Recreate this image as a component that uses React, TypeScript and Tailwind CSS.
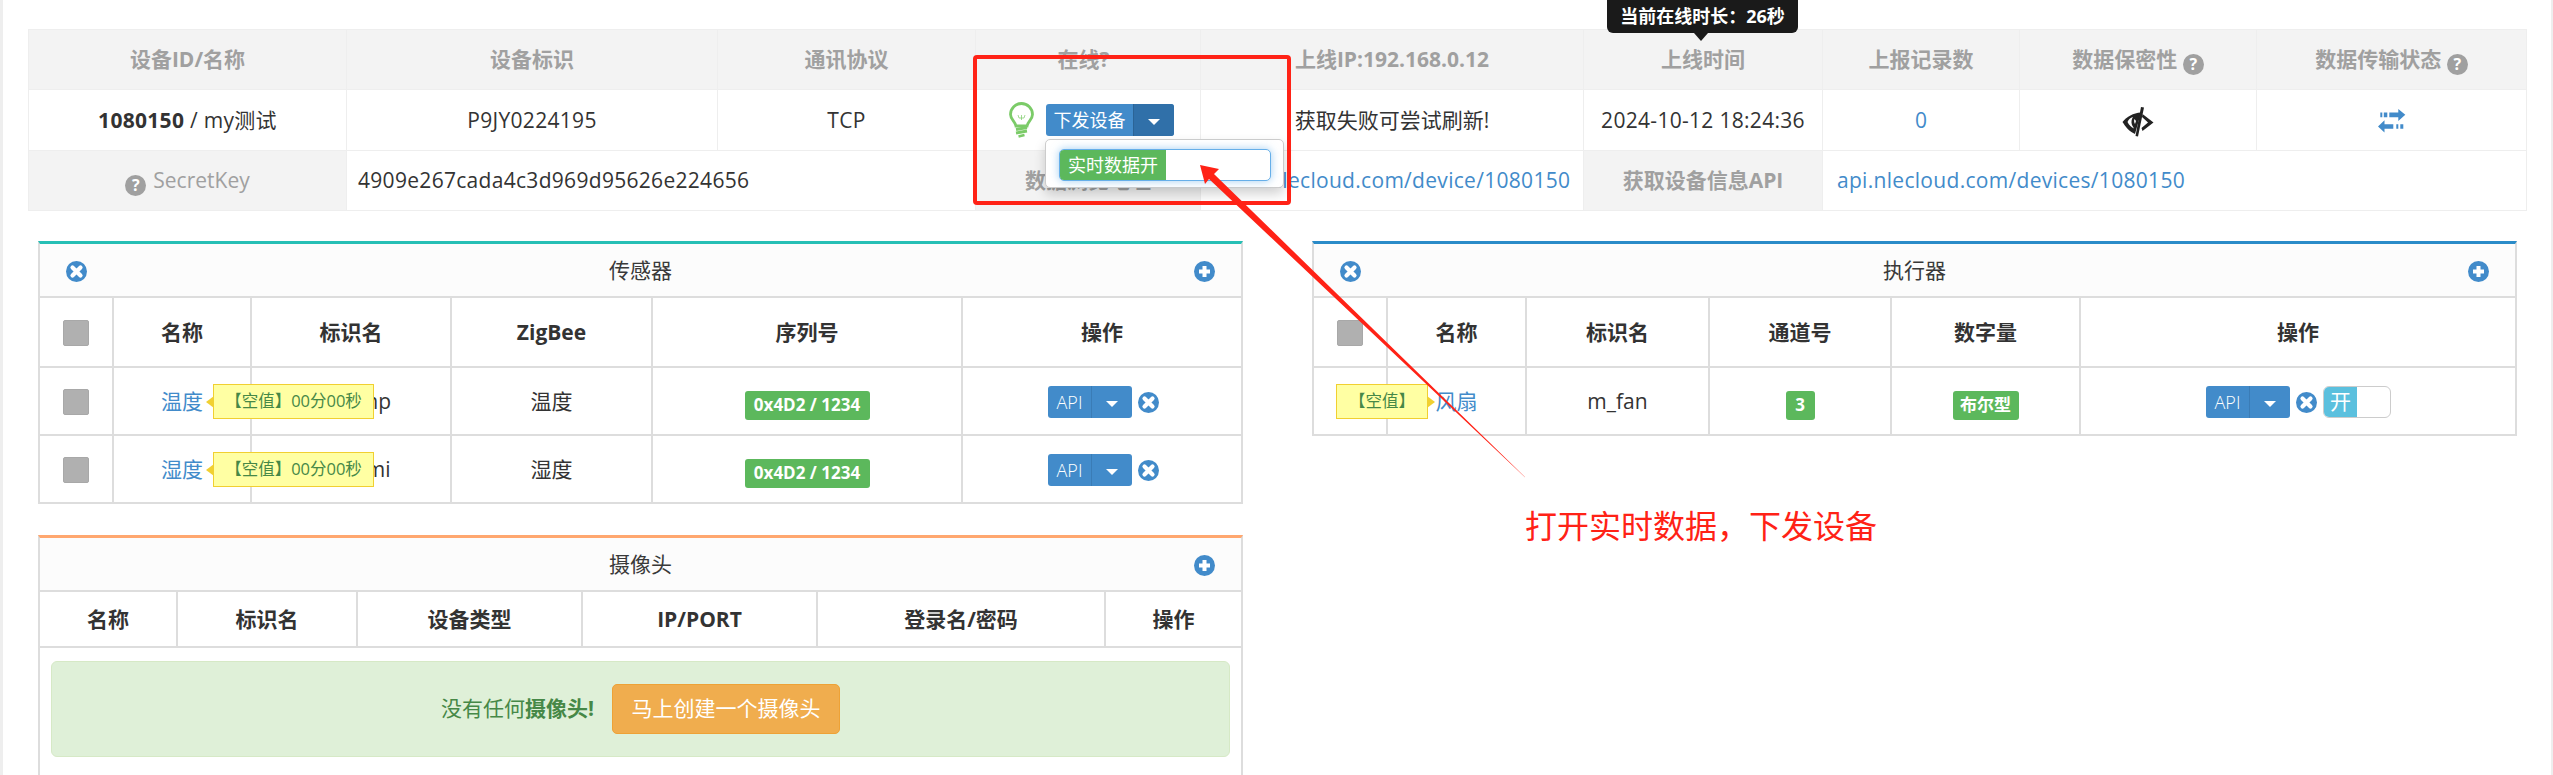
import React from "react";

const FONT = "font-['Open_Sans','Noto_Sans_CJK_SC',sans-serif]";

function XIcon({ className = "" }: { className?: string }) {
  return (
    <svg viewBox="0 0 21 21" className={`w-[21px] h-[21px] shrink-0 ${className}`}>
      <circle cx="10.5" cy="10.5" r="10.5" fill="#428bca" />
      <path d="M6.5 6.5 L14.5 14.5 M14.5 6.5 L6.5 14.5" stroke="#fff" strokeWidth="4.2" strokeLinecap="round" />
    </svg>
  );
}

function PlusIcon() {
  return (
    <svg viewBox="0 0 21 21" className="w-[21px] h-[21px] shrink-0">
      <circle cx="10.5" cy="10.5" r="10.5" fill="#428bca" />
      <path d="M10.5 5 V16 M5 10.5 H16" stroke="#fff" strokeWidth="4" />
    </svg>
  );
}

function HelpIcon({ className = "" }: { className?: string }) {
  return (
    <span className={`inline-flex w-[21px] h-[21px] rounded-full bg-[#a0a0a0] text-white text-[16px] leading-none font-bold items-center justify-center align-[-3px] ${className}`}>
      ?
    </span>
  );
}

function Caret() {
  return <span className="w-0 h-0 border-l-[6px] border-r-[6px] border-t-[6px] border-l-transparent border-r-transparent border-t-white" />;
}

function ApiButton() {
  return (
    <span className="inline-flex w-[84px] h-[32px] rounded-[3px] bg-[#428bca] text-white text-[18px] font-light overflow-hidden shrink-0">
      <span className="w-[44px] flex items-center justify-center border-r border-[#3a7cb6]">API</span>
      <span className="flex-1 flex items-center justify-center pt-[3px]">
        <Caret />
      </span>
    </span>
  );
}

function GreenLabel({ children, className = "" }: { children: React.ReactNode; className?: string }) {
  return (
    <span className={`inline-flex h-[29px] items-center justify-center rounded-[3px] bg-[#5cb85c] text-white text-[17px] font-bold ${className}`}>
      {children}
    </span>
  );
}

function Tip({ children, width, side, className = "" }: { children: React.ReactNode; width: string; side: "left" | "right"; className?: string }) {
  return (
    <div className={`absolute h-[35px] flex items-center justify-center border border-[#f1d031] bg-[#ffffa3] text-[#468847] text-[16.5px] whitespace-nowrap ${width} ${className}`}>
      {children}
      {side === "left" ? (
        <span className="absolute left-[-8px] top-[11px] w-0 h-0 border-t-[6px] border-b-[6px] border-r-[8px] border-t-transparent border-b-transparent border-r-[#f1d031]" />
      ) : (
        <span className="absolute right-[-8px] top-[11px] w-0 h-0 border-t-[6px] border-b-[6px] border-l-[8px] border-t-transparent border-b-transparent border-l-[#f1d031]" />
      )}
    </div>
  );
}

function Check() {
  return <span className="block mx-auto w-[26px] h-[26px] rounded-[2px] bg-[#b0b0b0] border border-[#a8a8a8]" />;
}

function PanelHead({ title, left = true }: { title: string; left?: boolean }) {
  return (
    <div className="relative h-[54px] flex items-center justify-center pt-[2px] bg-[#fcfcfc] border-b-2 border-[#ddd] text-[21px] text-[#393939]">
      <span>{title}</span>
      {left && (
        <span className="absolute left-[26px] top-[17px]">
          <XIcon />
        </span>
      )}
      <span className="absolute right-[26px] top-[17px]">
        <PlusIcon />
      </span>
    </div>
  );
}

const th = "border-r-2 last:border-r-0 border-[#ddd] font-bold text-[21px] text-[#333] text-center p-0 pt-[1px]";
const td = "border-r-2 last:border-r-0 border-[#ddd] text-[21px] text-[#333] text-center p-0 pt-[2px]";

const tth = "border border-[#eee] bg-[#f3f3f3] font-bold text-[21px] text-[#a0a0a0] text-center p-0 pt-[1px]";
const ttd = "border border-[#eee] bg-white text-[21px] text-[#333] text-center p-0 pt-[1px]";
const latin = "tracking-[0.3px]";

export default function App() {
  return (
    <div className={`relative h-[775px] overflow-hidden bg-white border-l-[3px] border-r-[2px] border-[#eee] ${FONT}`}>
      <div className="pt-[29px] pl-[25px]">
        <table className="table-fixed border-collapse w-[2498px]">
          <colgroup>
            <col className="w-[318px]" />
            <col className="w-[371px]" />
            <col className="w-[258px]" />
            <col className="w-[225px]" />
            <col className="w-[383px]" />
            <col className="w-[239px]" />
            <col className="w-[197px]" />
            <col className="w-[237px]" />
            <col className="w-[270px]" />
          </colgroup>
          <tbody>
            <tr className="h-[60px]">
              <th className={tth}>设备ID/名称</th>
              <th className={tth}>设备标识</th>
              <th className={tth}>通讯协议</th>
              <th className={`${tth} pr-[9px]`}>在线?</th>
              <th className={tth}>上线IP:192.168.0.12</th>
              <th className={tth}>上线时间</th>
              <th className={tth}>上报记录数</th>
              <th className={tth}>
                数据保密性 <HelpIcon />
              </th>
              <th className={tth}>
                数据传输状态 <HelpIcon />
              </th>
            </tr>
            <tr className="h-[61px]">
              <td className={`${ttd} ${latin}`}>
                <b>1080150</b> / my测试
              </td>
              <td className={`${ttd} ${latin}`}>P9JY0224195</td>
              <td className={`${ttd} ${latin}`}>TCP</td>
              <td className={ttd}>
                <div className="flex items-center pl-[33px] gap-[12px] -mt-[1px]">
                  <svg viewBox="0 0 25 36" className="w-[25px] h-[36px] shrink-0" fill="none" stroke="#7bcb68">
                    <path d="M7 24 C6.5 19.5 1.5 17.5 1.5 12.5 A11 11 0 0 1 23.5 12.5 C23.5 17.5 18.5 19.5 18 24 Z" strokeWidth="2.8" />
                    <path d="M12.5 18 V13 M9 13 L10 16 H15 L16 13" strokeWidth="1" opacity="0.7" />
                    <path d="M7 27.5 L18 25.5 M7 31 L18 29" strokeWidth="2.8" />
                    <path d="M9.5 34.5 L15.5 33" strokeWidth="2.8" />
                  </svg>
                  <span className="inline-flex w-[128px] h-[32px] rounded-[3px] bg-[#428bca] text-white text-[18px] overflow-hidden shrink-0">
                    <span className="w-[87px] flex items-center justify-center">下发设备</span>
                    <span className="flex-1 flex items-center justify-center pt-[3px] bg-[#3070a9] border-l border-[#2b6496]">
                      <Caret />
                    </span>
                  </span>
                </div>
              </td>
              <td className={ttd}>获取失败可尝试刷新!</td>
              <td className={`${ttd} ${latin}`}>2024-10-12 18:24:36</td>
              <td className={`${ttd} !text-[#428bca]`}>0</td>
              <td className={ttd}>
                <svg viewBox="0 0 32 30" className="block mx-auto w-[32px] h-[30px] translate-y-[1px]">
                  <path d="M0.5 15 C5 9.5 11 6 19 5.5 L13 27 C8 25 3.5 20 0.5 15 Z" fill="#222" />
                  <path d="M5.5 15 C6.5 12.5 8.5 10.8 11 10 C9.5 12 9 15 10 18 L12 21.5 C9.5 20.5 7 18 5.5 15 Z" fill="#fff" />
                  <path d="M12.5 12 C11.8 13.5 12 15.5 13 17 L14 14 Z" fill="#fff" />
                  <path d="M19 0 L22 0.5 L16 29.5 L13.5 29 Z" fill="#222" />
                  <path d="M20.5 7 L31.5 15.5 L20.5 24 L19.5 21 L26 15.5 L20 10 Z" fill="#222" />
                </svg>
              </td>
              <td className={ttd}>
                <svg viewBox="0 0 28 24" className="block mx-auto w-[28px] h-[24px]" fill="#428bca">
                  <path d="M2.3 3.5 H4.3 V8.2 H2.3 Z M5.8 3.5 H9.3 V8.2 H5.8 Z M11.3 3.5 H20.3 V0 L27.3 5.8 L20.3 12 V8.2 H11.3 Z" />
                  <path d="M25.3 15.2 H22.3 V19.8 H25.3 Z M20.3 15.2 H18.3 V19.8 H20.3 Z M15.3 15.2 H6.5 V11.2 L0 17.5 L6.5 23.5 V19.8 H15.3 Z" />
                </svg>
              </td>
            </tr>
            <tr className="h-[60px]">
              <th className={`${tth} !font-normal`}>
                <HelpIcon className="mr-[7px]" />
                SecretKey
              </th>
              <td className={`${ttd} ${latin} !text-left pl-[11px]`} colSpan={2}>
                4909e267cada4c3d969d95626e224656
              </td>
              <th className={tth}>数据浏览地址</th>
              <td className={`${ttd} ${latin} !text-[#428bca] whitespace-nowrap overflow-hidden`}>www.nlecloud.com/device/1080150</td>
              <th className={tth}>获取设备信息API</th>
              <td className={`${ttd} ${latin} !text-left !text-[#428bca] pl-[14px]`} colSpan={3}>
                api.nlecloud.com/devices/1080150
              </td>
            </tr>
          </tbody>
        </table>
      </div>

      <div className="flex gap-[69px] pl-[35px] pt-[30px]">
        <div className="w-[1205px] shrink-0">
          <div className="relative border-x-2 border-b-2 border-[#ddd] border-t-[3px] border-t-[#26bfb5]">
            <PanelHead title="传感器" />
            <table className="table-fixed border-collapse w-full">
              <colgroup>
                <col className="w-[73px]" />
                <col className="w-[138px]" />
                <col className="w-[200px]" />
                <col className="w-[201px]" />
                <col className="w-[310px]" />
                <col />
              </colgroup>
              <thead>
                <tr className="h-[69px] border-b-2 border-[#ddd]">
                  <th className={th}>
                    <Check />
                  </th>
                  <th className={th}>名称</th>
                  <th className={th}>标识名</th>
                  <th className={th}>ZigBee</th>
                  <th className={th}>序列号</th>
                  <th className={th}>操作</th>
                </tr>
              </thead>
              <tbody>
                <tr className="h-[68px] border-b-2 border-[#ddd]">
                  <td className={td}>
                    <Check />
                  </td>
                  <td className={`${td} !text-[#428bca]`}>温度</td>
                  <td className={`${td} relative`}>
                    <span>m_temp</span>
                    <Tip width="w-[161px]" side="left" className="left-[-39px] top-[16px]">
                      【空值】00分00秒
                    </Tip>
                  </td>
                  <td className={td}>温度</td>
                  <td className={td}>
                    <GreenLabel className="w-[125px] translate-y-[2px]">0x4D2 / 1234</GreenLabel>
                  </td>
                  <td className={td}>
                    <div className="flex items-center pl-[85px] gap-[6px]">
                      <ApiButton />
                      <XIcon />
                    </div>
                  </td>
                </tr>
                <tr className="h-[67px]">
                  <td className={td}>
                    <Check />
                  </td>
                  <td className={`${td} !text-[#428bca]`}>湿度</td>
                  <td className={`${td} relative`}>
                    <span>m_humi</span>
                    <Tip width="w-[161px]" side="left" className="left-[-39px] top-[16px]">
                      【空值】00分00秒
                    </Tip>
                  </td>
                  <td className={td}>湿度</td>
                  <td className={td}>
                    <GreenLabel className="w-[125px] translate-y-[2px]">0x4D2 / 1234</GreenLabel>
                  </td>
                  <td className={td}>
                    <div className="flex items-center pl-[85px] gap-[6px]">
                      <ApiButton />
                      <XIcon />
                    </div>
                  </td>
                </tr>
              </tbody>
            </table>
          </div>

          <div className="mt-[31px] border-x-2 border-[#ddd] border-t-[3px] border-t-[#ffa76f]">
            <PanelHead title="摄像头" left={false} />
            <table className="table-fixed border-collapse w-full">
              <colgroup>
                <col className="w-[137px]" />
                <col className="w-[180px]" />
                <col className="w-[225px]" />
                <col className="w-[235px]" />
                <col className="w-[288px]" />
                <col />
              </colgroup>
              <thead>
                <tr className="h-[55px] border-b-2 border-[#ddd]">
                  <th className={th}>名称</th>
                  <th className={th}>标识名</th>
                  <th className={th}>设备类型</th>
                  <th className={th}>IP/PORT</th>
                  <th className={th}>登录名/密码</th>
                  <th className={th}>操作</th>
                </tr>
              </thead>
            </table>
            <div className="pt-[13px] px-[11px] pb-[20px]">
              <div className="h-[96px] flex items-center justify-center gap-[18px] rounded-[6px] border border-[#d6e9c6] bg-[#dff0d8] text-[21px] text-[#468847]">
                <span>
                  没有任何<b>摄像头!</b>
                </span>
                <span className="w-[228px] h-[50px] flex items-center justify-center rounded-[5px] bg-[#f0ad4e] border border-[#eea236] text-white">
                  马上创建一个摄像头
                </span>
              </div>
            </div>
          </div>
        </div>

        <div className="w-[1205px] shrink-0">
          <div className="relative border-x-2 border-b-2 border-[#ddd] border-t-[3px] border-t-[#2a8bc8]">
            <PanelHead title="执行器" />
            <table className="table-fixed border-collapse w-full">
              <colgroup>
                <col className="w-[73px]" />
                <col className="w-[139px]" />
                <col className="w-[183px]" />
                <col className="w-[182px]" />
                <col className="w-[189px]" />
                <col />
              </colgroup>
              <thead>
                <tr className="h-[69px] border-b-2 border-[#ddd]">
                  <th className={th}>
                    <Check />
                  </th>
                  <th className={th}>名称</th>
                  <th className={th}>标识名</th>
                  <th className={th}>通道号</th>
                  <th className={th}>数字量</th>
                  <th className={th}>操作</th>
                </tr>
              </thead>
              <tbody>
                <tr className="h-[67px]">
                  <td className={`${td} relative`}>
                    <Check />
                    <Tip width="w-[92px]" side="right" className="left-[22px] top-[16px]">
                      【空值】
                    </Tip>
                  </td>
                  <td className={`${td} !text-[#428bca]`}>风扇</td>
                  <td className={td}>m_fan</td>
                  <td className={td}>
                    <GreenLabel className="w-[29px] translate-y-[2px]">3</GreenLabel>
                  </td>
                  <td className={td}>
                    <GreenLabel className="w-[66px] translate-y-[2px]">布尔型</GreenLabel>
                  </td>
                  <td className={td}>
                    <div className="flex items-center pl-[125px] gap-[6px]">
                      <ApiButton />
                      <XIcon />
                      <span className="flex w-[68px] h-[32px] rounded-[6px] border border-[#ccc] bg-white overflow-hidden text-white text-[21px]">
                        <span className="w-[33px] bg-[#5bc0de] flex items-center justify-center">开</span>
                      </span>
                    </div>
                  </td>
                </tr>
              </tbody>
            </table>
          </div>
        </div>
      </div>

      {/* popup menu of the dropdown */}
      <div className="absolute left-[1042px] top-[139px] w-[239px] h-[49px] rounded-[5px] border border-[#ccc] bg-white shadow-[0_6px_12px_rgba(0,0,0,0.18)]">
        <div className="absolute left-[13px] top-[9px] w-[212px] h-[32px] rounded-[5px] border border-[#66afe9] bg-white overflow-hidden shadow-[0_0_8px_rgba(102,175,233,0.6)]">
          <span className="flex w-[106px] h-full items-center justify-center bg-[#5cb85c] text-white text-[18px]">实时数据开</span>
        </div>
      </div>

      {/* online-time tooltip */}
      <div className="absolute left-[1604px] top-0 w-[191px] h-[33px] rounded-b-[6px] bg-[#1a1a1a] text-white text-[18px] font-bold flex items-center justify-center whitespace-nowrap">
        当前在线时长：26秒
        <span className="absolute left-[87px] top-[33px] w-0 h-0 border-l-[7px] border-r-[7px] border-t-[8px] border-l-transparent border-r-transparent border-t-[#1a1a1a]" />
      </div>

      {/* annotation: red frame, arrow and caption */}
      <div className="absolute left-[970px] top-[55px] w-[318px] h-[150px] rounded-[4px] border-[4px] border-[#ff2216]" />
      <svg className="absolute left-[-3px] top-0 w-[2553px] h-[775px] pointer-events-none" viewBox="0 0 2553 775">
        <path d="M1200 165 L1219 169 L1214 174 L1530 482 L1209 179 L1205 184 Z" fill="#ff2216" />
      </svg>
      <div className="absolute left-[1522px] top-[502px] text-[32px] leading-[44px] text-[#ff2216] font-['Noto_Sans_CJK_SC',sans-serif] whitespace-nowrap">
        打开实时数据，下发设备
      </div>
    </div>
  );
}
